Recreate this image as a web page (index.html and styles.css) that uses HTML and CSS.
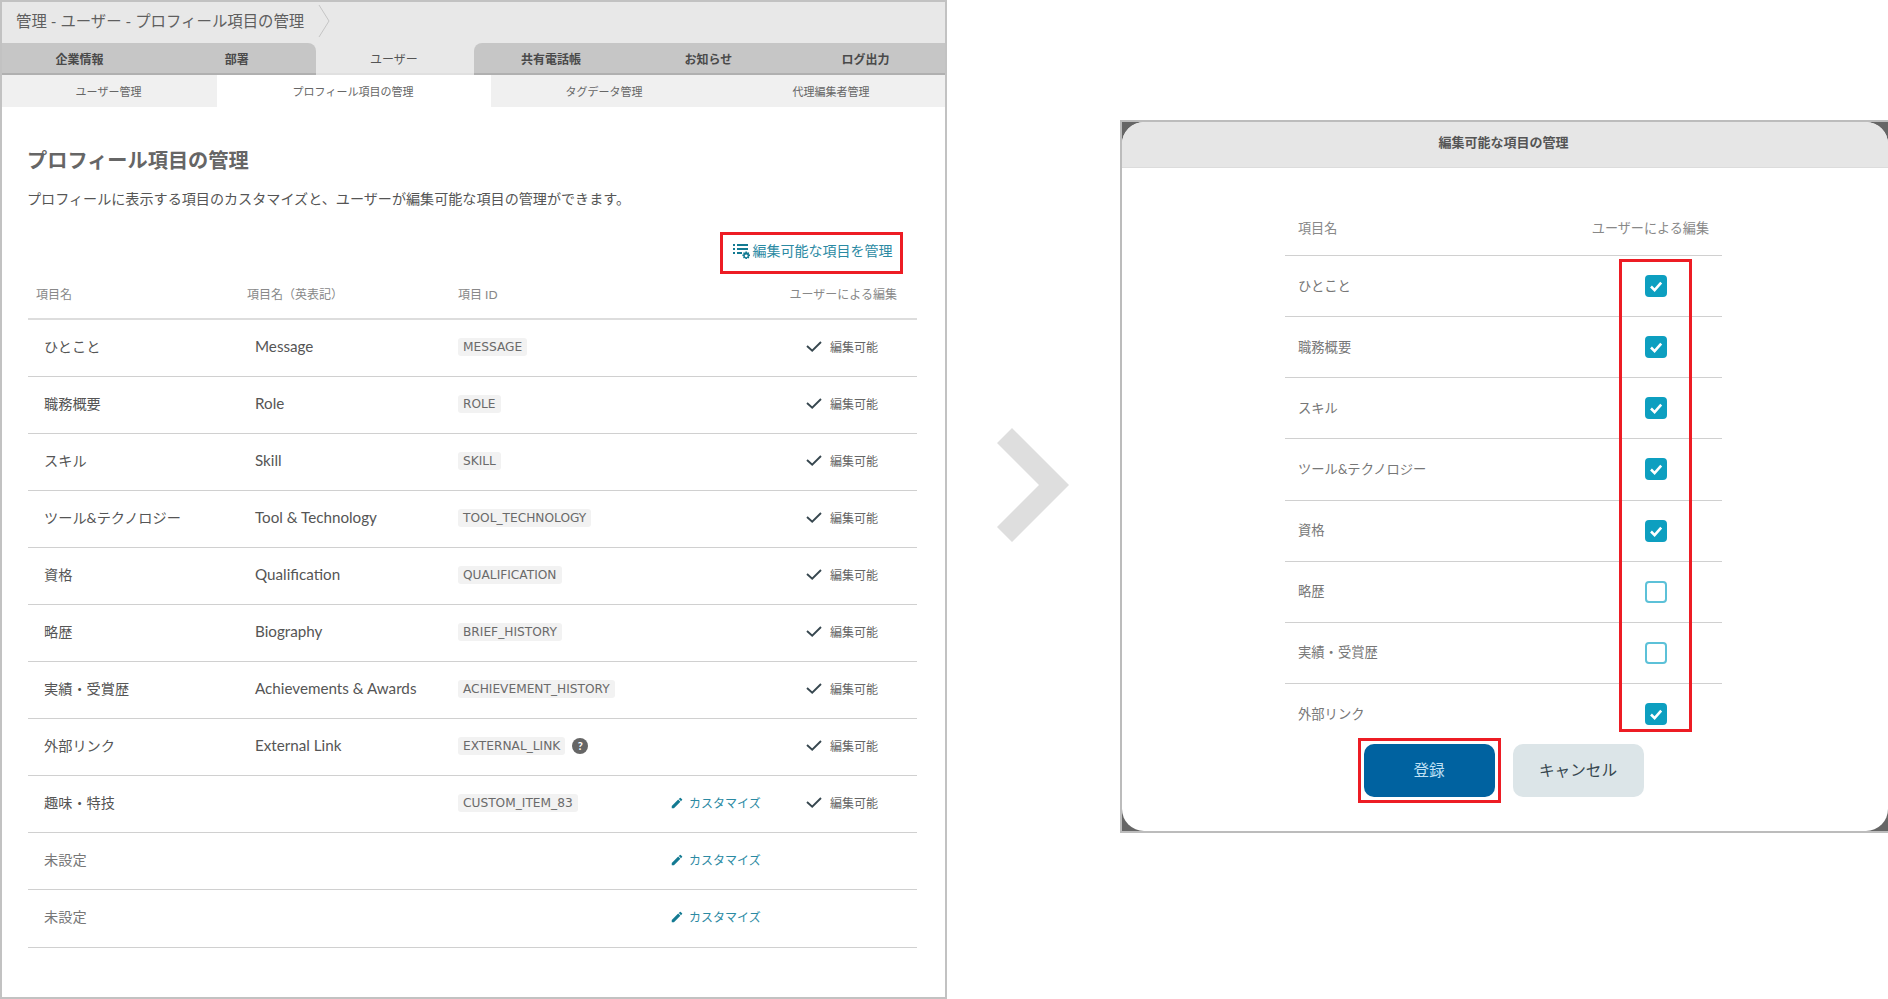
FILE: index.html
```html
<!DOCTYPE html>
<html lang="ja">
<head>
<meta charset="utf-8">
<title>プロフィール項目の管理</title>
<link rel="stylesheet" href="styles.css">
</head>
<body>
<svg class="defs" width="0" height="0" aria-hidden="true">
  <symbol id="tick" viewBox="0 0 16 11"><path d="M1 5l5.2 4.6L15 1" fill="none" stroke="#37474f" stroke-width="1.9"/></symbol>
  <symbol id="pen" viewBox="0 0 24 24"><path fill="#137a92" d="M3 17.25V21h3.75L17.81 9.94l-3.75-3.75L3 17.25zM20.71 7.04a1 1 0 0 0 0-1.41l-2.34-2.34a1 1 0 0 0-1.41 0l-1.83 1.83 3.75 3.75 1.83-1.83z"/></symbol>
  <symbol id="boxtick" viewBox="0 0 22 22"><path d="M6 11.5l3.6 3.6L16.2 7.6" fill="none" stroke="#fff" stroke-width="2.6"/></symbol>
</svg>
<main class="stage">
  <section class="panel">
    <div class="crumb">
      <span class="crumb-text">管理 - ユーザー - プロフィール項目の管理</span>
      <svg class="crumb-arrow" width="12" height="32" viewBox="0 0 12 32"><path d="M1 0l10 16L1 32" fill="none" stroke="#c4c4c4" stroke-width="1"/></svg>
    </div>
    <nav class="tabs">
      <a class="tab">企業情報</a>
      <a class="tab tab-before">部署</a>
      <a class="tab tab-active">ユーザー</a>
      <a class="tab tab-after">共有電話帳</a>
      <a class="tab">お知らせ</a>
      <a class="tab">ログ出力</a>
    </nav>
    <nav class="subtabs">
      <a class="subtab sub-user">ユーザー管理</a>
      <a class="subtab sub-profile">プロフィール項目の管理</a>
      <a class="subtab sub-tag">タグデータ管理</a>
      <a class="subtab sub-proxy">代理編集者管理</a>
    </nav>
    <div class="content">
      <h1 class="title">プロフィール項目の管理</h1>
      <p class="lead">プロフィールに表示する項目のカスタマイズと、ユーザーが編集可能な項目の管理ができます。</p>
      <div class="manage-row">
        <a class="manage-link">
          <svg class="manage-icon" width="18" height="18" viewBox="0 0 18 18"><g fill="#137a92"><rect x="0" y="1" width="2" height="2"/><rect x="4" y="1" width="11" height="2"/><rect x="0" y="5" width="2" height="2"/><rect x="4" y="5" width="11" height="2"/><rect x="0" y="9" width="2" height="2"/><rect x="4" y="9" width="5" height="2"/><path d="M13 8.5l1 0 .3 1.3 1.2-.6.8.8-.6 1.2 1.3.3v1.6l-1.3.3.6 1.2-.8.8-1.2-.6-.3 1.3h-1.6l-.3-1.3-1.2.6-.8-.8.6-1.2-1.3-.3v-1.6l1.3-.3-.6-1.2.8-.8 1.2.6.3-1.3zM13.2 11.4a1.4 1.4 0 1 0 .01 0z" fill-rule="evenodd"/></g></svg>
          編集可能な項目を管理
        </a>
      </div>
      <div class="thead">
        <span>項目名</span><span>項目名（英表記）</span><span>項目 ID</span><span class="thead-end">ユーザーによる編集</span>
      </div>
      <div class="row"><span class="name">ひとこと</span><span class="en">Message</span><span class="id"><code>MESSAGE</code></span><span></span><span class="ok"><svg class="tick"><use href="#tick"/></svg>編集可能</span></div>
      <div class="row"><span class="name">職務概要</span><span class="en">Role</span><span class="id"><code>ROLE</code></span><span></span><span class="ok"><svg class="tick"><use href="#tick"/></svg>編集可能</span></div>
      <div class="row"><span class="name">スキル</span><span class="en">Skill</span><span class="id"><code>SKILL</code></span><span></span><span class="ok"><svg class="tick"><use href="#tick"/></svg>編集可能</span></div>
      <div class="row"><span class="name">ツール&amp;テクノロジー</span><span class="en">Tool &amp; Technology</span><span class="id"><code>TOOL_TECHNOLOGY</code></span><span></span><span class="ok"><svg class="tick"><use href="#tick"/></svg>編集可能</span></div>
      <div class="row"><span class="name">資格</span><span class="en">Qualification</span><span class="id"><code>QUALIFICATION</code></span><span></span><span class="ok"><svg class="tick"><use href="#tick"/></svg>編集可能</span></div>
      <div class="row"><span class="name">略歴</span><span class="en">Biography</span><span class="id"><code>BRIEF_HISTORY</code></span><span></span><span class="ok"><svg class="tick"><use href="#tick"/></svg>編集可能</span></div>
      <div class="row"><span class="name">実績・受賞歴</span><span class="en">Achievements &amp; Awards</span><span class="id"><code>ACHIEVEMENT_HISTORY</code></span><span></span><span class="ok"><svg class="tick"><use href="#tick"/></svg>編集可能</span></div>
      <div class="row"><span class="name">外部リンク</span><span class="en">External Link</span><span class="id"><code>EXTERNAL_LINK</code><i class="help">?</i></span><span></span><span class="ok"><svg class="tick"><use href="#tick"/></svg>編集可能</span></div>
      <div class="row"><span class="name">趣味・特技</span><span class="en"></span><span class="id"><code>CUSTOM_ITEM_83</code></span><a class="custom"><svg class="pen"><use href="#pen"/></svg>カスタマイズ</a><span class="ok"><svg class="tick"><use href="#tick"/></svg>編集可能</span></div>
      <div class="row"><span class="name muted">未設定</span><span class="en"></span><span class="id"></span><a class="custom"><svg class="pen"><use href="#pen"/></svg>カスタマイズ</a><span></span></div>
      <div class="row"><span class="name muted">未設定</span><span class="en"></span><span class="id"></span><a class="custom"><svg class="pen"><use href="#pen"/></svg>カスタマイズ</a><span></span></div>
    </div>
  </section>

  <svg class="big-arrow" width="72" height="114" viewBox="0 0 72 114"><path fill="#dedede" d="M15 0L72 57 15 114 0 99 42 57 0 15z"/></svg>

  <section class="modal">
    <div class="modal-inner">
      <h2 class="modal-title">編集可能な項目の管理</h2>
      <div class="edit-table">
        <div class="edit-head"><span>項目名</span><span>ユーザーによる編集</span></div>
        <div class="edit-row"><span class="edit-label">ひとこと</span><span class="box on"><svg class="box-tick"><use href="#boxtick"/></svg></span></div>
        <div class="edit-row"><span class="edit-label">職務概要</span><span class="box on"><svg class="box-tick"><use href="#boxtick"/></svg></span></div>
        <div class="edit-row"><span class="edit-label">スキル</span><span class="box on"><svg class="box-tick"><use href="#boxtick"/></svg></span></div>
        <div class="edit-row"><span class="edit-label">ツール&amp;テクノロジー</span><span class="box on"><svg class="box-tick"><use href="#boxtick"/></svg></span></div>
        <div class="edit-row"><span class="edit-label">資格</span><span class="box on"><svg class="box-tick"><use href="#boxtick"/></svg></span></div>
        <div class="edit-row"><span class="edit-label">略歴</span><span class="box"></span></div>
        <div class="edit-row"><span class="edit-label">実績・受賞歴</span><span class="box"></span></div>
        <div class="edit-row edit-row-last"><span class="edit-label">外部リンク</span><span class="box on"><svg class="box-tick"><use href="#boxtick"/></svg></span></div>
        <div class="mark-boxes"></div>
      </div>
      <div class="actions">
        <div class="mark-submit"><button class="btn btn-primary">登録</button></div>
        <button class="btn btn-cancel">キャンセル</button>
      </div>
    </div>
  </section>
</main>
</body>
</html>
```
FILE: styles.css
```css
* { box-sizing: border-box; }
html, body { margin: 0; padding: 0; background: #fff; }
body {
  width: 1888px;
  height: 999px;
  overflow: hidden;
  font-family: "Lato", "Noto Sans CJK JP", sans-serif;
  color: #555;
}
.defs { position: absolute; }
.stage { display: flex; align-items: flex-start; height: 999px; }

/* left panel */
.panel {
  width: 947px;
  height: 999px;
  flex: none;
  border: 2px solid #c2c2c2;
  display: flex;
  flex-direction: column;
}
.crumb {
  height: 41px;
  background: #e8e8e8;
  display: flex;
  align-items: center;
  padding-left: 14px;
  gap: 14px;
  flex: none;
}
.crumb-text { font-size: 15.4px; color: #5f5f5f; margin-top: -6px; }
.crumb-arrow { margin-top: -4px; }
.tabs { display: flex; height: 32px; flex: none; background: #e8e8e8; }
.tab {
  flex: 1;
  background: #c6c6c6;
  border-bottom: 2px solid #b0b0b0;
  font-size: 12px;
  font-weight: 700;
  color: #4a4a4a;
  display: flex;
  align-items: center;
  justify-content: center;
  padding-right: 2px;
}
.tab-before { border-top-right-radius: 8px; }
.tab-after { border-top-left-radius: 8px; }
.tab-active { background: #e8e8e8; border-bottom-color: #e0e0e0; color: #555; font-weight: 400; }
.subtabs { display: flex; height: 32px; flex: none; background: #f0f0f0; }
.subtab {
  font-size: 11px;
  color: #666;
  display: flex;
  align-items: center;
  justify-content: center;
  padding-right: 2px;
}
.sub-user { width: 215px; }
.sub-profile { width: 274px; background: #fff; }
.sub-tag { width: 228px; }
.sub-proxy { width: 226px; }
.content { padding: 38px 28px 0 26px; }
.title { margin: 0 0 0 -1px; font-size: 20.2px; line-height: 30px; font-weight: 700; color: #666; }
.lead { margin: 14px 0 0 -1px; font-size: 14.1px; line-height: 20px; color: #555; white-space: nowrap; }
.manage-row { display: flex; justify-content: flex-end; margin-top: 23px; padding-right: 14px; }
.manage-link {
  width: 183px;
  height: 42px;
  border: 3px solid #ed1c24;
  display: flex;
  align-items: center;
  justify-content: center;
  gap: 2px;
  font-size: 14px;
  color: #2b8aa3;
  white-space: nowrap;
  padding-bottom: 7px;
  padding-left: 2px;
}
.manage-icon { margin-top: 4px; }
.thead {
  display: grid;
  grid-template-columns: 211px 211px 1fr auto;
  height: 46px;
  align-items: center;
  padding: 0 20px 5px 8px;
  border-bottom: 2px solid #ddd;
  font-size: 12px;
  color: #888;
}
.row {
  display: grid;
  grid-template-columns: 211px 211px 220px 136px 1fr;
  height: 57.05px;
  align-items: center;
  padding-bottom: 3px;
  border-bottom: 1px solid #d0d0d0;
  font-size: 14.2px;
  color: #555;
}
.name { padding-left: 16px; margin-bottom: 2px; }
.en { padding-left: 16px; font-size: 15.2px; margin-bottom: 2px; }
.muted { color: #777; }
.id { padding-left: 8px; display: flex; align-items: center; gap: 7px; }
code {
  font-family: "DejaVu Sans", sans-serif;
  font-size: 12.2px;
  line-height: 18px;
  padding: 0 5px;
  background: #f2f2f2;
  border-radius: 3px;
  color: #6a6a6a;
}
.help {
  width: 16px;
  height: 16px;
  border-radius: 50%;
  background: #666;
  color: #fff;
  font: 700 11px/16px "Lato", sans-serif;
  text-align: center;
}
.custom { display: flex; align-items: center; gap: 5px; font-size: 12px; color: #2b8aa3; }
.pen { width: 14px; height: 14px; flex: none; }
.ok { display: flex; align-items: center; gap: 8px; font-size: 12px; color: #666; }
.tick { width: 16px; height: 11px; flex: none; }

/* big arrow */
.big-arrow { flex: none; margin: 428px 51px 0 50px; }

/* modal */
.modal {
  flex: 1;
  margin-top: 120px;
  height: 713px;
  border: 2px solid #bcbcbc;
  border-right: 0;
  background: #666;
}
.modal-inner {
  height: 100%;
  background: #fff;
  border-radius: 22px;
  overflow: hidden;
  display: flex;
  flex-direction: column;
  align-items: center;
}
.modal-title {
  align-self: stretch;
  flex: none;
  height: 46px;
  margin: 0;
  padding-right: 3px;
  background: #e6e6e6;
  border-bottom: 1px solid #dcdcdc;
  font-size: 13px;
  font-weight: 700;
  color: #555;
  text-align: center;
  line-height: 40px;
}
.edit-table { position: relative; width: 437px; margin: 33px 3px 0 0; flex: none; }
.edit-head {
  display: flex;
  justify-content: space-between;
  align-items: center;
  height: 55px;
  padding: 0 13px 2px 13px;
  font-size: 13.1px;
  color: #888;
  border-bottom: 1px solid #d0d0d0;
}
.edit-row {
  display: flex;
  justify-content: space-between;
  align-items: center;
  height: 61.14px;
  padding: 0 55px 0 13px;
  font-size: 13.3px;
  color: #777;
  border-bottom: 1px solid #d0d0d0;
}
.edit-label { margin-bottom: 2px; }
.edit-row-last { border-bottom: 0; }
.box {
  width: 22px;
  height: 22px;
  border: 2px solid #5cc1d8;
  border-radius: 4px;
  background: #fff;
  flex: none;
}
.box.on { background: #0d9fc0; border-color: #0d9fc0; }
.box-tick { display: block; width: 22px; height: 22px; margin: -2px; }
.mark-boxes {
  position: absolute;
  left: 334px;
  top: 58px;
  width: 73px;
  height: 473px;
  border: 3px solid #ed1c24;
  pointer-events: none;
}
.actions {
  display: flex;
  align-items: center;
  gap: 12px;
  margin-top: -7px;
  padding-right: 9px;
  position: relative;
}
.mark-submit { border: 3px solid #ed1c24; padding: 3px; }
.btn {
  display: block;
  width: 131px;
  height: 53px;
  border: 0;
  border-radius: 10px;
  font-family: "Noto Sans CJK JP", sans-serif;
  font-size: 15.6px;
  padding: 0 0 3px;
}
.btn-primary { background: #0062a0; color: #bfe0f5; }
.btn-cancel { background: #dce5e8; color: #37474f; }
```
